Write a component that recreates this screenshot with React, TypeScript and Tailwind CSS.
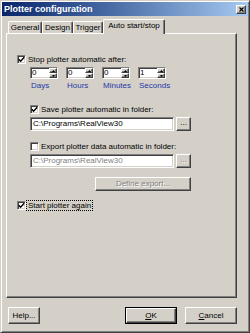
const sunken =
  "border-t border-l border-b border-r border-t-[#808080] border-l-[#808080] border-b-white border-r-white shadow-[inset_1px_1px_0_#404040,inset_-1px_-1px_0_#d4d0c8]";
const raised =
  "border-t border-l border-b border-r border-t-white border-l-white border-b-[#404040] border-r-[#404040] shadow-[inset_-1px_-1px_0_#808080]";

function Check({ checked }: { checked?: boolean }) {
  return (
    <span className={`flex h-[9px] w-[9px] shrink-0 items-center justify-center bg-white ${sunken}`}>
      {checked && (
        <svg width="7" height="7" viewBox="0 0 7 7">
          <path d="M0.8 3.2 L2.6 5.2 L6.2 1.2" stroke="#000" strokeWidth="1.4" fill="none" />
        </svg>
      )}
    </span>
  );
}

function Spinner({ value, label }: { value: string; label: string }) {
  return (
    <div className="flex w-[28px] flex-col">
      <div className={`flex h-[12px] w-[28px] bg-white ${sunken}`}>
        <span className="flex-1 pl-[1px] text-[8px] leading-[10px]">{value}</span>
        <div className="flex w-[8px] flex-col bg-[#d4d0c8]">
          <div className={`flex h-[5px] items-center justify-center ${raised}`}>
            <svg width="3" height="2" viewBox="0 0 3 2">
              <path d="M1.5 0 L3 2 L0 2 Z" fill="#000" />
            </svg>
          </div>
          <div className={`flex h-[5px] items-center justify-center ${raised}`}>
            <svg width="3" height="2" viewBox="0 0 3 2">
              <path d="M0 0 L3 0 L1.5 2 Z" fill="#000" />
            </svg>
          </div>
        </div>
      </div>
      <span className="mt-[2px] h-[9px] pl-[1px] text-[8px] leading-[9px] text-[#2439a8]">{label}</span>
    </div>
  );
}

function Tab({ label, active, w }: { label: string; active?: boolean; w: string }) {
  return (
    <div
      className={`${w} flex items-center justify-center rounded-t-[2px] border-t border-l border-r border-t-white border-l-white border-r-[#404040] bg-[#d4d0c8] shadow-[inset_-1px_0_0_#808080] text-[8px] ${
        active ? "relative z-10 -mb-px h-[15px] pb-[2px]" : "h-[12px]"
      }`}
    >
      {label}
    </div>
  );
}

export default function App() {
  return (
    <div
      className="flex h-[333px] w-[250px] flex-col border-t border-l border-b border-r border-t-[#d4d0c8] border-l-[#d4d0c8] border-b-[#404040] border-r-[#404040] bg-[#d4d0c8] p-px text-black shadow-[inset_1px_1px_0_#fff,inset_-1px_-1px_0_#808080]"
      style={{ fontFamily: '"Liberation Sans", Arial, sans-serif' }}
    >
      <div className="flex h-[14px] items-center justify-between bg-gradient-to-r from-[#0a246a] to-[#a6caf0] pl-[2px] pr-[2px]">
        <span className="text-[9px] font-bold leading-none text-white">Plotter configuration</span>
        <div className={`flex h-[9px] w-[10px] items-center justify-center bg-[#d4d0c8] ${raised}`}>
          <svg width="5" height="5" viewBox="0 0 5 5">
            <path d="M0.5 0.5 L4.5 4.5 M4.5 0.5 L0.5 4.5" stroke="#000" strokeWidth="1.2" />
          </svg>
        </div>
      </div>

      <div className="mt-[3px] flex h-[14px] items-end pl-[6px]">
        <Tab label="General" w="w-[34px]" />
        <Tab label="Design" w="w-[31px]" />
        <Tab label="Trigger" w="w-[30px]" />
        <Tab label="Auto start/stop" w="w-[62px]" active />
      </div>

      <div className="ml-[4px] flex h-[265px] w-[231px] flex-col border-t border-l border-b border-r border-t-white border-l-white border-b-[#404040] border-r-[#404040] pl-[10px] pt-[21px] text-[8px] shadow-[inset_-1px_-1px_0_#808080]">
        <label className="flex h-[9px] items-center gap-[2px]">
          <Check checked />
          <span className="leading-none">Stop plotter automatic after:</span>
        </label>

        <div className="ml-[13px] flex flex-col">
          <div className="mt-[3px] flex gap-[8px]">
            <Spinner value="0" label="Days" />
            <Spinner value="0" label="Hours" />
            <Spinner value="0" label="Minutes" />
            <Spinner value="1" label="Seconds" />
          </div>

          <label className="mt-[15px] flex h-[9px] items-center gap-[2px]">
            <Check checked />
            <span className="leading-none">Save plotter automatic in folder:</span>
          </label>
          <div className="mt-[3px] flex w-[161px] gap-[2px]">
            <div className={`flex h-[14px] w-[146px] items-center bg-white pl-[2px] ${sunken}`}>C:\Programs\RealView30</div>
            <div className={`flex h-[14px] w-[15px] items-center justify-center pb-[2px] ${raised}`}>...</div>
          </div>

          <label className="mt-[11px] flex h-[9px] items-center gap-[2px]">
            <Check />
            <span className="leading-none">Export plotter data automatic in folder:</span>
          </label>
          <div className="mt-[3px] flex w-[161px] gap-[2px]">
            <div className={`flex h-[14px] w-[146px] items-center bg-white pl-[2px] text-[#808080] ${sunken}`}>
              C:\Programs\RealView30
            </div>
            <div className={`flex h-[14px] w-[15px] items-center justify-center pb-[2px] text-[#808080] [text-shadow:1px_1px_0_#fff] ${raised}`}>
              ...
            </div>
          </div>
          <div className="mt-[9px] flex w-[161px] justify-end">
            <div className={`flex h-[14px] w-[96px] items-center justify-center text-[#808080] [text-shadow:1px_1px_0_#fff] ${raised}`}>
              Define export...
            </div>
          </div>
        </div>

        <label className="mt-[10px] flex h-[9px] items-center gap-[1px]">
          <Check checked />
          <span className="px-px leading-[9px] outline outline-1 outline-dotted outline-black">Start plotter again</span>
        </label>
      </div>

      <div className="mt-[9px] flex items-center pl-[6px] pr-[11px] text-[8px]">
        <div className={`flex h-[17px] w-[32px] items-center justify-center ${raised}`}>Help...</div>
        <div className="flex-1" />
        <div className="flex h-[17px] w-[52px] border border-black">
          <div className={`flex flex-1 items-center justify-center ${raised}`}>
            <span>
              <span className="underline">O</span>K
            </span>
          </div>
        </div>
        <div className={`ml-[8px] flex h-[17px] w-[52px] items-center justify-center ${raised}`}>
          <span>
            <span className="underline">C</span>ancel
          </span>
        </div>
      </div>
    </div>
  );
}
